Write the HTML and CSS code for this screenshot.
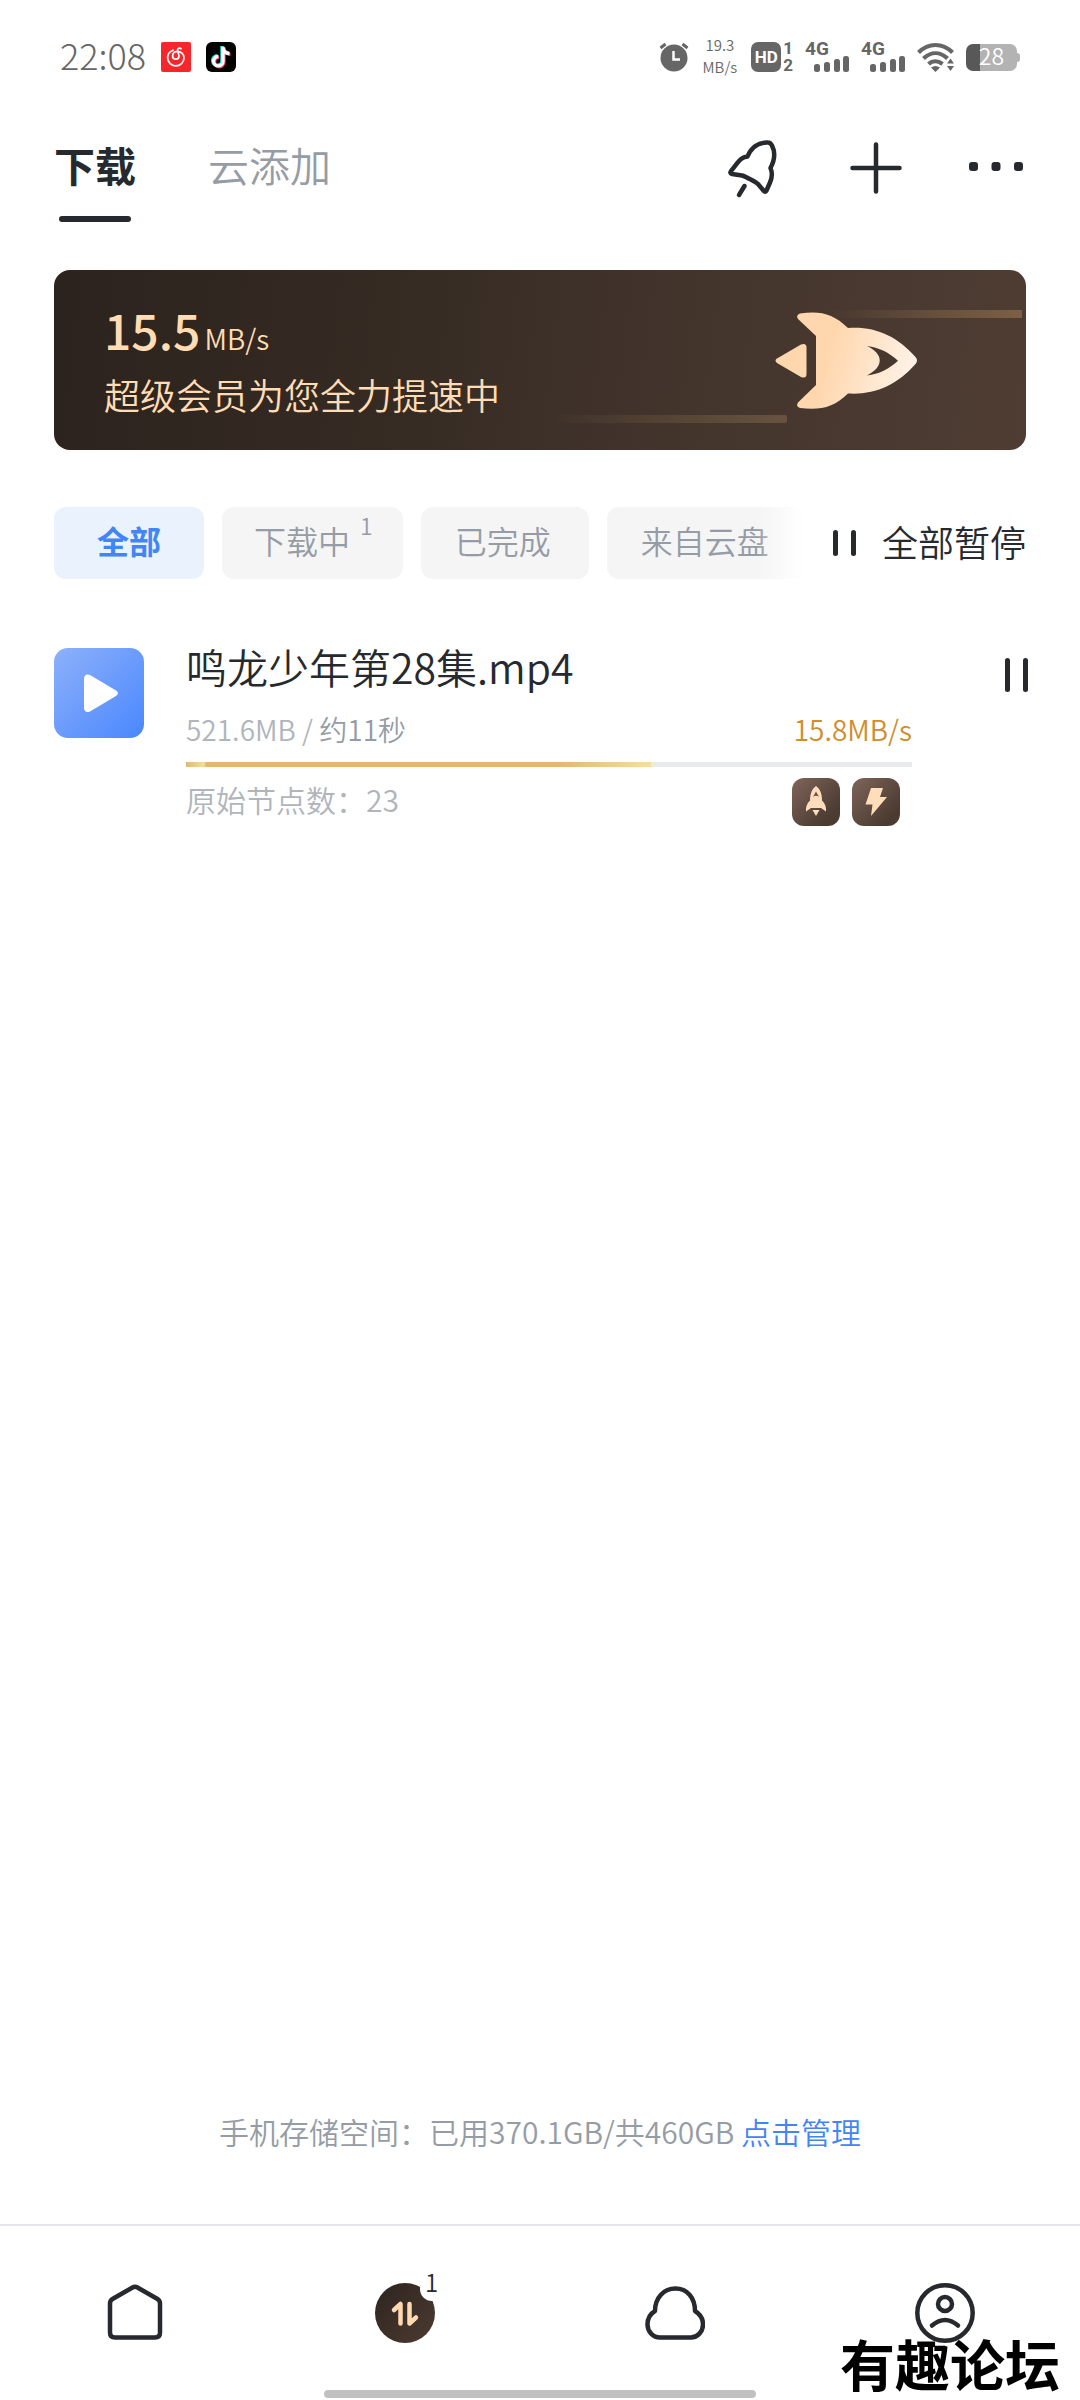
FILE: index.html
```html
<!DOCTYPE html>
<html lang="zh-CN">
<head>
    <meta charset="UTF-8">
    <meta name="viewport" content="width=device-width, initial-scale=1.0">
    <title>下载</title>
    <link rel="stylesheet" href="styles.css">
</head>
<body>
    <div class="status-bar">
        <div class="status-left">
            <span class="time">22:08</span>
            <svg class="app-icon" viewBox="0 0 30 30" fill="none" stroke="#fff" stroke-width="1.7" stroke-linecap="round">
                <rect width="30" height="30" rx="2" fill="#f8262a" stroke="none"/>
                <path d="M12 8.2c-3.300 1.300-5.400 4-5.400 7.400a8.200 8.200 0 0 0 16.400.3c0-3.800-3-6.600-6.800-6.600-2.700 0-4.600 2.100-4.600 4.600a3.200 3.200 0 0 0 6.400 0c0-1.200-1.500-4.500-1.500-6 0-1.700 2-2.400 3.600-1.200"/>
            </svg>
            <svg class="app-icon" viewBox="0 0 30 30">
                <rect width="30" height="30" rx="6" fill="#000"/>
                <g fill="none" stroke-width="3.400">
                    <path d="M16 4v14.500a4.700 4.700 0 1 1-4.700-4.700M16 5c.5 3.500 3 5.600 6.500 5.800" stroke="#25e6df"/>
                    <path d="M18 5.500V20a4.700 4.700 0 1 1-4.700-4.700M18 6.500c.5 3.500 3 5.600 6.500 5.800" stroke="#f5315a"/>
                    <path d="M17 4.700v14.500a4.700 4.700 0 1 1-4.700-4.700M17 5.700c.5 3.500 3 5.600 6.500 5.800" stroke="#fff"/>
                </g>
            </svg>
        </div>
        <div class="status-right">
            <svg width="30" height="30" viewBox="0 0 30 30">
                <circle cx="15" cy="16" r="13.500" fill="#666"/>
                <path d="M1.500 6 6.500 2M28.500 6l-5-4" stroke="#666" stroke-width="3"/>
                <path d="M14.500 9v8.500H21" fill="none" stroke="#fff" stroke-width="2.500"/>
            </svg>
            <span class="net-speed">19.3<br>MB/s</span>
            <div class="volte">
                <span class="hd">HD</span>
                <span class="sims"><span>1</span><span>2</span></span>
            </div>
            <div class="signal">
                <span>4G</span>
                <svg width="35" height="16" viewBox="0 0 35 16" fill="#666">
                    <rect y="8" width="6" height="8" rx="2.500"/>
                    <rect x="10" y="6" width="6" height="10" rx="2.500"/>
                    <rect x="20" y="3" width="6" height="13" rx="2.500"/>
                    <rect x="29" width="6" height="16" rx="2.500"/>
                </svg>
            </div>
            <div class="signal">
                <span>4G</span>
                <svg width="35" height="16" viewBox="0 0 35 16" fill="#666">
                    <rect y="8" width="6" height="8" rx="2.500"/>
                    <rect x="10" y="6" width="6" height="10" rx="2.500"/>
                    <rect x="20" y="3" width="6" height="13" rx="2.500"/>
                    <rect x="29" width="6" height="16" rx="2.500"/>
                </svg>
            </div>
            <svg width="37" height="30" viewBox="0 0 37 30" fill="none" stroke="#666" stroke-width="4.200">
                <path d="M1.500 10.500c10-10 24-10 34 0M6.500 16.500c7.500-7 16.500-7 24 0M11.500 22c4-3.500 9.500-3.500 14 0"/>
                <path d="m14 25.500 4.500 4.500 4.500-4.500c-3-2-6-2-9 0zM30 21.500l3.500-5 3.500 5zM30 24l3.500 5 3.500-5z" fill="#666" stroke="none"/>
            </svg>
            <div class="battery"><span>28</span></div>
        </div>
    </div>

    <header class="top-bar">
        <div class="tabs">
            <button class="tab active">下载</button>
            <button class="tab">云添加</button>
        </div>
        <div class="actions">
            <button class="icon-btn" aria-label="加速">
                <svg viewBox="4 0 60 66" fill="none" stroke="#262a2e" stroke-width="4.500" stroke-linecap="round" stroke-linejoin="round">
                    <path d="M25.500 22.500C29 14 36 8 46 8.500c2 0 3 1 4 3 4 8 2.500 15-1.500 22.500 2.500 6 1.500 10-.5 14.500l-3.500 8c-.7 1.500-1.800 1.500-2.800.3L36 50c-1.500-1.800-12.500-7.500-16-8.500l-10-1.500c-1.800-.3-2-1.500-1-2.800l7-9c2.800-4 5-5 9.500-5.700z"/>
                    <path d="m22.500 52-5.500 9"/>
                </svg>
            </button>
            <button class="icon-btn" aria-label="新建">
                <svg viewBox="0 0 60 66" stroke="#262a2e" stroke-width="4.500" stroke-linecap="round">
                    <path d="M30 10.500v47M6.500 34h47"/>
                </svg>
            </button>
            <button class="icon-btn" aria-label="更多">
                <svg viewBox="0 0 60 66" fill="#262a2e">
                    <rect x="3" y="28" width="9" height="9" rx="3"/>
                    <rect x="25.500" y="28" width="9" height="9" rx="3"/>
                    <rect x="48" y="28" width="9" height="9" rx="3"/>
                </svg>
            </button>
        </div>
    </header>

    <main>
        <section class="vip-banner">
            <div class="vip-text">
                <p class="vip-speed">15.5<small>MB/s</small></p>
                <p class="vip-desc">超级会员为您全力提速中</p>
            </div>
            <svg class="vip-art" width="482" height="180" viewBox="0 0 482 180">
                <defs>
                    <linearGradient id="body" gradientUnits="userSpaceOnUse" x1="235" y1="60" x2="377" y2="100">
                        <stop offset="0.400" stop-color="#ffd7ae"/>
                        <stop offset="1" stop-color="#fff3ea"/>
                    </linearGradient>
                    <linearGradient id="streakTop">
                        <stop offset="0" stop-color="#7c6045" stop-opacity="0"/>
                        <stop offset="1" stop-color="#7c6045"/>
                    </linearGradient>
                    <linearGradient id="streakBottom">
                        <stop offset="0" stop-color="#67533d" stop-opacity="0"/>
                        <stop offset="1" stop-color="#67533d"/>
                    </linearGradient>
                </defs>
                <rect x="290" y="40" width="192" height="8" fill="url(#streakTop)"/>
                <rect x="8" y="145" width="239" height="8" rx="2" fill="url(#streakBottom)"/>
                <path fill="url(#body)" d="M276 66 258 49q-2.500-4 2-5.500c19-3 33-.5 48 14.500 27-2 49 8 67.500 29q3 3.500 0 7C357 115 335 125 308 123.500c-14 14-28 17-48 14.500q-4.500-1.500-2-5.500l18-17.500z"/>
                <path d="M327 76c17 8 17 21 0 29.500 12-1.500 22-6.500 31-14.800-9-8.200-19-13.200-31-14.700z" fill="#47382f"/>
                <path d="m237 88.500 24-14q5.500-2 5.500 3v26.500q0 5-5.500 3l-24-14q-3-2.300 0-4.500z" fill="url(#body)"/>
            </svg>
        </section>

        <div class="filter-row">
            <div class="chips">
                <button class="chip active">全部</button>
                <button class="chip chip-count">下载中<sup>1</sup></button>
                <button class="chip">已完成</button>
                <button class="chip">来自云盘</button>
            </div>
            <button class="pause-all">
                <svg width="24" height="26" viewBox="0 0 24 26" fill="#262a2e">
                    <rect width="5" height="26" rx="2.500"/>
                    <rect x="18" width="5" height="26" rx="2.500"/>
                </svg>
                <span>全部暂停</span>
            </button>
        </div>

        <article class="task">
            <svg class="thumb" viewBox="0 0 90 90">
                <defs>
                    <linearGradient id="thumbBg" x2="1" y2="1">
                        <stop offset="0" stop-color="#8db1fb"/>
                        <stop offset="1" stop-color="#4a87fd"/>
                    </linearGradient>
                </defs>
                <rect width="90" height="90" rx="14" fill="url(#thumbBg)"/>
                <path d="M30 30q1-5 6-3l26 15.500q4 2.500 0 5.500L36 63.500q-5 2-6-3z" fill="#fff"/>
            </svg>
            <div class="task-body">
                <h2 class="task-name">鸣龙少年第28集.mp4</h2>
                <div class="task-meta">
                    <span class="size">521.6MB / <span class="remain">约11秒</span></span>
                    <span class="speed">15.8MB/s</span>
                </div>
                <div class="progress"><div class="progress-fill" style="width: 64%"></div></div>
                <div class="task-extra">
                    <span class="nodes">原始节点数：23</span>
                    <div class="badges">
                        <span class="badge">
                            <svg viewBox="0 0 48 48" fill="#ffddbb">
                                <path fill-rule="evenodd" d="M24 8c4 3 6 7.500 6 14.500 3 3 4.500 6.500 4 11l-5-3.500H19l-5 3.500c-.5-4.500 1-8 4-11C18 15.500 20 11 24 8zm0 5.500L21 19q3-2.500 6 0z"/>
                                <path d="M20.500 32h7L24 38z"/>
                            </svg>
                        </span>
                        <span class="badge">
                            <svg viewBox="0 0 48 48" fill="#ffddbb">
                                <path d="M19 10h12l-3 9h7L19 38l1.500-11.500H13.500z"/>
                            </svg>
                        </span>
                    </div>
                </div>
            </div>
            <button class="pause-btn" aria-label="暂停">
                <svg width="24" height="34" viewBox="0 0 24 34" fill="#262a2e">
                    <rect width="5" height="34" rx="2.500"/>
                    <rect x="18" width="5" height="34" rx="2.500"/>
                </svg>
            </button>
        </article>
    </main>

    <p class="storage">手机存储空间：已用370.1GB/共460GB <a href="#">点击管理</a></p>

    <footer class="bottom">
        <nav class="bottom-nav">
            <a href="#" aria-label="首页">
                <svg viewBox="0 0 60 60" fill="none" stroke="#262a2e" stroke-width="4.500" stroke-linejoin="round">
                    <path d="M27.500 4.500q2.500-1.500 5 0l20 11.500q2.500 1.500 2.500 4.500v29q0 5-5 5H10q-5 0-5-5v-29q0-3 2.500-4.500z"/>
                </svg>
            </a>
            <a href="#" aria-label="下载">
                <svg viewBox="0 0 60 60">
                    <defs>
                        <linearGradient id="navBg" x2="1" y2="1">
                            <stop offset="0" stop-color="#2d241f"/>
                            <stop offset="1" stop-color="#4c3b31"/>
                        </linearGradient>
                    </defs>
                    <circle cx="30" cy="30" r="30" fill="url(#navBg)"/>
                    <circle cx="57" cy="6" r="12" fill="#fff"/>
                    <path d="m19 27 6.500-6v19.500M34.500 21v19.500l6.500-6" fill="none" stroke="#ffd9b0" stroke-width="4.500" stroke-linecap="round" stroke-linejoin="round"/>
                </svg>
                <span class="nav-count">1</span>
            </a>
            <a href="#" aria-label="云盘">
                <svg viewBox="0 0 60 60" fill="none" stroke="#262a2e" stroke-width="4.500" stroke-linejoin="round">
                    <path d="M15 54.500h31c6.500 0 12-6 12-13 0-6-3-10.500-8-13.500C50 14.500 42 5.500 30.500 5.500S10 14.500 10 28c-5 3-7.500 7.500-7.500 13.500 0 7 5.500 13 12.500 13z"/>
                </svg>
            </a>
            <a href="#" aria-label="我的">
                <svg viewBox="0 0 60 60" fill="none" stroke="#262a2e" stroke-width="4.500" stroke-linecap="round">
                    <circle cx="30" cy="30" r="27.700"/>
                    <circle cx="30" cy="21" r="7"/>
                    <path d="M17 42.500q13-11 26 0"/>
                </svg>
            </a>
        </nav>
        <div class="gesture-bar"></div>
        <span class="watermark">有趣论坛</span>
    </footer>
</body>
</html>
```

FILE: styles.css
```css
* {
    box-sizing: border-box;
}

body {
    margin: 0;
    min-height: 100vh;
    display: flex;
    flex-direction: column;
    background: #fff;
    color: #262a2e;
    font-family: "Noto Sans CJK SC", sans-serif;
    font-size: 28px;
    font-weight: 350;
}

button {
    padding: 0;
    border: none;
    background: none;
    color: inherit;
    font: inherit;
    cursor: pointer;
}

a {
    text-decoration: none;
}

p, h2 {
    margin: 0;
}

svg {
    display: block;
    flex-shrink: 0;
}

/* status bar */
.status-bar {
    display: flex;
    justify-content: space-between;
    align-items: center;
    height: 114px;
    padding: 0 60px;
    color: #666;
}

.status-left, .status-right {
    display: flex;
    align-items: center;
}

.status-left {
    gap: 15px;
}

.status-right {
    gap: 12px;
}

.time {
    padding-bottom: 6px;
    font-size: 36px;
    font-weight: 300;
}

.app-icon {
    width: 30px;
    height: 30px;
}

.net-speed {
    margin: 0 2px;
    padding-bottom: 2px;
    font-size: 15px;
    line-height: 22px;
    text-align: center;
}

.volte {
    display: flex;
    align-items: center;
    gap: 2px;
    font-family: Roboto, sans-serif;
    font-weight: bold;
}

.hd {
    width: 30px;
    border-radius: 7px;
    background: #666;
    color: #fff;
    font-size: 17px;
    line-height: 30px;
    text-align: center;
}

.sims {
    display: flex;
    flex-direction: column;
    font-size: 17px;
    line-height: 17px;
}

.signal {
    display: flex;
    flex-direction: column;
    align-items: flex-end;
    width: 44px;
    font: bold 19px/14px Roboto, sans-serif;
}

.signal span {
    align-self: flex-start;
}

.battery {
    position: relative;
    width: 51px;
    height: 27px;
    margin-right: 3px;
    border-radius: 7px;
    background: linear-gradient(to right, #585858 14px, #b3b3b3 14px);
    color: #fff;
    font-size: 23px;
    line-height: 23px;
    text-align: center;
}

.battery::after {
    content: "";
    position: absolute;
    right: -3px;
    top: 9px;
    width: 3px;
    height: 9px;
    border-radius: 0 3px 3px 0;
    background: #b3b3b3;
}

/* top tabs */
.top-bar {
    display: flex;
    justify-content: space-between;
    align-items: flex-start;
    padding: 20px 54px 0;
}

.tabs {
    display: flex;
    align-items: flex-start;
    gap: 72px;
}

.tab {
    color: #959ca5;
    font-size: 41px;
    line-height: 60px;
}

.tab.active {
    color: #262a2e;
    font-weight: bold;
}

.tab.active::after {
    content: "";
    display: block;
    width: 72px;
    height: 6px;
    margin: 22px auto 0;
    border-radius: 3px;
    background: #262a2e;
}

.actions {
    display: flex;
    gap: 60px;
}

.icon-btn {
    width: 60px;
    height: 66px;
}

/* vip banner */
.vip-banner {
    display: flex;
    justify-content: space-between;
    height: 180px;
    margin: 48px 54px 0;
    padding-left: 50px;
    padding-right: 4px;
    border-radius: 16px;
    background: linear-gradient(97deg, #2d231e, #352b23 35%, #41332b 60%, #4f3d33);
    color: #ffdcb4;
}

.vip-text {
    padding-top: 28px;
    white-space: nowrap;
}

.vip-speed {
    font-size: 48px;
    font-weight: 500;
    line-height: 62px;
}

.vip-speed small {
    margin-left: 4px;
    font-size: 28px;
    font-weight: 350;
    line-height: 28px;
}

.vip-desc {
    margin-top: 10px;
    font-size: 36px;
    line-height: 48px;
}

.vip-art {
    margin-left: -60px;
}

/* filters */
.filter-row {
    display: flex;
    align-items: center;
    gap: 28px;
    margin: 57px 54px 0;
}

.chips {
    position: relative;
    display: flex;
    flex: 1;
    gap: 18px;
    min-width: 0;
    overflow: hidden;
}

.chips::after {
    content: "";
    position: absolute;
    top: 0;
    right: 0;
    width: 48px;
    height: 100%;
    background: linear-gradient(to right, rgba(255,255,255,0), #fff);
}

.chip {
    flex-shrink: 0;
    height: 72px;
    padding: 0 38px 6px 34px;
    border-radius: 12px;
    background: #f5f5f5;
    color: #959ca5;
    font-size: 32px;
    white-space: nowrap;
}

.chip.active {
    padding: 0 43px 6px;
    background: #eaf2fe;
    color: #4285f4;
    font-weight: bold;
}

.chip-count {
    display: flex;
    align-items: center;
    padding: 0 30px 6px 32px;
}

.chip sup {
    align-self: flex-start;
    margin-left: 10px;
    padding-top: 6px;
    font-size: 23px;
    line-height: 24px;
}

.pause-all {
    display: flex;
    align-items: center;
    gap: 25px;
    font-size: 36px;
    white-space: nowrap;
}

.pause-all span {
    padding-bottom: 4px;
}

/* download task */
.task {
    display: flex;
    align-items: flex-start;
    padding: 69px 51px 0 54px;
}

.thumb {
    width: 90px;
    height: 90px;
    margin-right: 42px;
}

.task-body {
    flex: 1;
    min-width: 0;
}

.task-name {
    font-size: 41px;
    font-weight: 350;
    line-height: 36px;
}

.task-meta {
    display: flex;
    justify-content: space-between;
    margin-top: 27px;
    line-height: 36px;
}

.size, .nodes {
    color: #b0b5bb;
}

.remain {
    color: #959ca5;
}

.speed {
    color: #cf8e2c;
}

.progress {
    height: 5px;
    margin-top: 15px;
    background: #e9eaeb;
}

.progress-fill {
    height: 100%;
    background: linear-gradient(to right, #e0b872, #f6dca4 18px, #e0b872 20px, #e0b872 80%, #f8dda3);
}

.task-extra {
    display: flex;
    justify-content: space-between;
    align-items: flex-start;
    margin-top: 11px;
}

.nodes {
    font-size: 30px;
    line-height: 42px;
}

.badges {
    display: flex;
    gap: 12px;
    padding-right: 12px;
}

.badge {
    width: 48px;
    height: 48px;
    border-radius: 12px;
    background: linear-gradient(135deg, #80655a, #4b3b31 80%);
}

.pause-btn {
    display: flex;
    justify-content: flex-end;
    width: 117px;
    padding: 10px 0;
}

/* storage info */
.storage {
    margin-top: auto;
    padding-bottom: 73px;
    color: #959ca5;
    font-size: 30px;
    line-height: 40px;
    text-align: center;
}

.storage a {
    color: #4285f4;
}

/* bottom navigation */
.bottom {
    position: relative;
    padding: 57px 0 2px;
    border-top: 2px solid #e4e4ea;
}

.bottom-nav {
    display: grid;
    grid-template-columns: repeat(4, 1fr);
    justify-items: center;
}

.bottom-nav a {
    position: relative;
    width: 60px;
    height: 60px;
    color: #262a2e;
}

.nav-count {
    position: absolute;
    top: -16px;
    left: 50px;
    font-size: 24px;
    line-height: 30px;
}

.gesture-bar {
    width: 40%;
    height: 8px;
    margin: 47px auto 0;
    border-radius: 4px;
    background: #c1c1c1;
}

.watermark {
    position: absolute;
    right: 20px;
    bottom: 8px;
    color: #000;
    font-size: 55px;
    font-weight: bold;
    line-height: 60px;
}
```
